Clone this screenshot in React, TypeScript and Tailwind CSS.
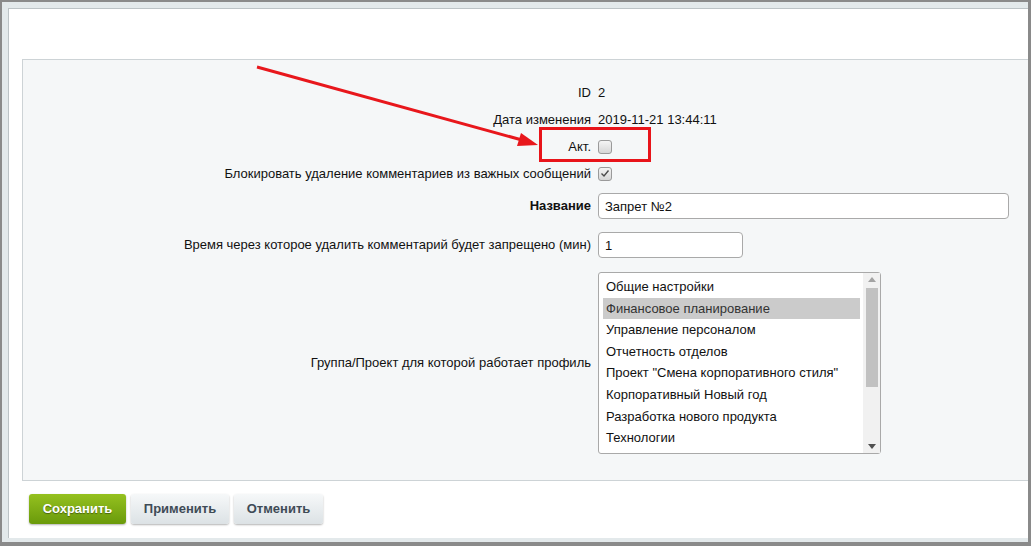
const groups = [
  "Общие настройки",
  "Финансовое планирование",
  "Управление персоналом",
  "Отчетность отделов",
  'Проект "Смена корпоративного стиля"',
  "Корпоративный Новый год",
  "Разработка нового продукта",
  "Технологии",
];

function Row({ label, bold, children, h = "h-[27px]", className = "" }: { label: string; bold?: boolean; children: React.ReactNode; h?: string; className?: string }) {
  return (
    <div className={`flex items-center ${h} ${className}`}>
      <div className={`w-[568px] shrink-0 text-right ${bold ? "font-bold" : ""}`}>{label}</div>
      <div className="ml-[7px] flex items-center">{children}</div>
    </div>
  );
}

function Checkbox({ checked }: { checked?: boolean }) {
  return (
    <div className="w-[14px] h-[14px] rounded-[3px] border border-[#9a9a9a] bg-gradient-to-b from-[#f4f4f4] to-[#d6d6d6] flex items-center justify-center">
      {checked && (
        <svg width="10" height="9" viewBox="0 0 10 9">
          <path d="M1.5 4.5 L4 7 L8.5 1.5" fill="none" stroke="#4a4a4a" strokeWidth="1.4" />
        </svg>
      )}
    </div>
  );
}

export default function App() {
  return (
    <div className="relative w-[1031px] h-[546px] bg-[#8a8a8a] pt-[2px] pl-[2px] pr-[3px] pb-[4px] font-['Liberation_Sans',Arial,sans-serif] text-[13px] text-[#111]">
      <div className="h-full bg-[#e3e9eb] pt-[6px] pl-[6px] pb-[4px]">
        <div className="h-full bg-white border-t border-l border-[#bcc3c6] pt-[50px] pl-[13px]">
          {/* Form panel */}
          <div className="h-[422px] bg-[#f5f7f8] border-t border-l border-b border-[#cdd3d6] pt-[19px]">
            <Row label="ID">2</Row>
            <Row label="Дата изменения">2019-11-21 13:44:11</Row>
            <Row label="Акт.">
              <Checkbox />
            </Row>
            <Row label="Блокировать удаление комментариев из важных сообщений">
              <Checkbox checked />
            </Row>
            <Row label="Название" bold h="h-[26px]" className="mt-[6px]">
              <input
                readOnly
                value="Запрет №2"
                className="w-[411px] h-[26px] rounded-[4px] border border-[#a9a9a9] bg-white px-[6px] outline-none"
              />
            </Row>
            <Row label="Время через которое удалить комментарий будет запрещено (мин)" h="h-[26px]" className="mt-[13px]">
              <input
                readOnly
                value="1"
                className="w-[145px] h-[26px] rounded-[4px] border border-[#a9a9a9] bg-white px-[6px] outline-none"
              />
            </Row>
            <Row label="Группа/Проект для которой работает профиль" h="h-[182px]" className="mt-[14px]">
              <div className="w-[283px] h-[182px] rounded-[3px] border border-[#a9a9a9] bg-white flex">
                <div className="flex-1 pt-[3px] pl-[4px] pr-[3px]">
                  {groups.map((g, i) => (
                    <div
                      key={g}
                      className={`h-[21.6px] flex items-center pl-[3px] ${i === 1 ? "bg-[#cbcbcb] text-[#333]" : ""}`}
                    >
                      {g}
                    </div>
                  ))}
                </div>
                <div className="w-[17px] bg-[#f1f1f1] flex flex-col items-center py-[4px]">
                  <svg width="8" height="5" viewBox="0 0 8 5">
                    <path d="M0 5 L4 0 L8 5 Z" fill="#a3a3a3" />
                  </svg>
                  <div className="w-[12px] h-[99px] bg-[#c1c1c1] mt-[6px] mb-auto" />
                  <svg width="8" height="5" viewBox="0 0 8 5">
                    <path d="M0 0 L4 5 L8 0 Z" fill="#505050" />
                  </svg>
                </div>
              </div>
            </Row>
          </div>

          {/* Buttons */}
          <div className="flex gap-[5px] mt-[13px] ml-[7px] font-bold">
            <button className="w-[97px] h-[30px] rounded-[3px] bg-gradient-to-b from-[#95c11f] to-[#6a9a0a] text-white [text-shadow:0_1px_1px_rgba(0,0,0,0.4)] shadow-[0_1px_2px_rgba(0,0,0,0.3)]">
              Сохранить
            </button>
            <button className="w-[98px] h-[30px] rounded-[3px] bg-gradient-to-b from-[#f6f8f9] to-[#dce2e5] text-[#3f4b56] shadow-[0_1px_2px_rgba(0,0,0,0.3)]">
              Применить
            </button>
            <button className="w-[89px] h-[30px] rounded-[3px] bg-gradient-to-b from-[#f6f8f9] to-[#dce2e5] text-[#3f4b56] shadow-[0_1px_2px_rgba(0,0,0,0.3)]">
              Отменить
            </button>
          </div>
        </div>
      </div>

      {/* Annotation: arrow and highlight */}
      <svg className="absolute left-0 top-0 pointer-events-none" width="1031" height="546">
        <line x1="257" y1="67" x2="522" y2="140" stroke="#e8171c" strokeWidth="3" />
        <path d="M538 145 L517 146 L521 133 Z" fill="#e8171c" />
      </svg>
      <div className="absolute left-[539px] top-[127px] w-[112px] h-[35px] border-[3px] border-[#e8141a]" />
    </div>
  );
}
